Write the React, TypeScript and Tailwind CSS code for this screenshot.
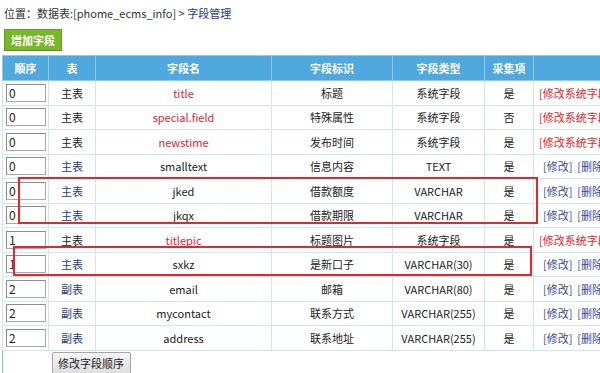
import React from "react";

type Row = {
  order: string;
  table: string;
  tableLink: boolean;
  name: string;
  sys: boolean;
  label: string;
  type: string;
  collect: string;
};

const rows: Row[] = [
  { order: "0", table: "主表", tableLink: false, name: "title", sys: true, label: "标题", type: "系统字段", collect: "是" },
  { order: "0", table: "主表", tableLink: false, name: "special.field", sys: true, label: "特殊属性", type: "系统字段", collect: "否" },
  { order: "0", table: "主表", tableLink: false, name: "newstime", sys: true, label: "发布时间", type: "系统字段", collect: "是" },
  { order: "0", table: "主表", tableLink: true, name: "smalltext", sys: false, label: "信息内容", type: "TEXT", collect: "是" },
  { order: "0", table: "主表", tableLink: true, name: "jked", sys: false, label: "借款额度", type: "VARCHAR", collect: "是" },
  { order: "0", table: "主表", tableLink: true, name: "jkqx", sys: false, label: "借款期限", type: "VARCHAR", collect: "是" },
  { order: "1", table: "主表", tableLink: false, name: "titlepic", sys: true, label: "标题图片", type: "系统字段", collect: "是" },
  { order: "1", table: "主表", tableLink: true, name: "sxkz", sys: false, label: "是新口子", type: "VARCHAR(30)", collect: "是" },
  { order: "2", table: "副表", tableLink: true, name: "email", sys: false, label: "邮箱", type: "VARCHAR(80)", collect: "是" },
  { order: "2", table: "副表", tableLink: true, name: "mycontact", sys: false, label: "联系方式", type: "VARCHAR(255)", collect: "是" },
  { order: "2", table: "副表", tableLink: true, name: "address", sys: false, label: "联系地址", type: "VARCHAR(255)", collect: "是" },
];

const cell = "border border-[#cfe6f6] p-0 text-center align-middle";
const head = "border border-[#8fcbef] p-0 text-center align-middle text-white font-bold";

export default function App() {
  return (
    <div
      className="relative w-[600px] h-[373px] overflow-hidden bg-white text-[11px] text-[#333]"
      style={{ fontFamily: '"Noto Sans CJK SC", "Noto Sans", sans-serif' }}
    >
      <div className="pl-[4px] pt-[5px] h-[29px] leading-[16px] text-[11px] text-[#333]">
        位置：数据表:[phome_ecms_info] &gt; <span className="text-[#253a8c]">字段管理</span>
      </div>
      <div className="pl-[4px]">
        <button className="w-[58px] h-[22px] bg-[#79b82a] border border-[#6aa023] border-b-[#5d8c1f] text-white font-bold text-[11px] leading-[20px]">
          增加字段
        </button>
      </div>
      <div className="mt-[4px] pl-[2px]">
        <table className="table-fixed border-collapse w-[720px] border border-[#7fc1ea]">
          <colgroup>
            <col className="w-[46px]" />
            <col className="w-[47px]" />
            <col className="w-[176px]" />
            <col className="w-[121px]" />
            <col className="w-[92px]" />
            <col className="w-[49px]" />
            <col className="w-[189px]" />
          </colgroup>
          <thead>
            <tr className="h-[25px] bg-[#4fa8de]">
              <th className={head}>顺序</th>
              <th className={head}>表</th>
              <th className={head}>字段名</th>
              <th className={head}>字段标识</th>
              <th className={head}>字段类型</th>
              <th className={head}>采集项</th>
              <th className={head}>操作</th>
            </tr>
          </thead>
          <tbody>
            {rows.map((r, i) => (
              <tr key={i} className="h-[24.5px]">
                <td className={cell + " text-left"}>
                  <div className="pl-[3px]">
                    <div className="w-[40px] h-[18px] border border-[#a9a9a9] border-t-[#8e8e8e] border-l-[#8e8e8e] bg-white pl-[2px] leading-[16px] text-[12px] text-[#222]">
                      {r.order}
                    </div>
                  </div>
                </td>
                <td className={cell + (r.tableLink ? " text-[#27398b]" : " text-[#222]")}>{r.table}</td>
                <td className={cell + (r.sys ? " text-[#e8232b]" : " text-[#222]")}>{r.name}</td>
                <td className={cell + " text-[#222]"}>{r.label}</td>
                <td className={cell + " text-[#222]"}>{r.type}</td>
                <td className={cell + " text-[#222]"}>{r.collect}</td>
                <td className={cell + " text-left whitespace-nowrap"}>
                  {r.sys ? (
                    <span className="pl-[5px] text-[#e8232b]">[修改系统字段]</span>
                  ) : (
                    <span className="pl-[9px] text-[#3b4a96]">[修改]&nbsp;&nbsp;[删除]</span>
                  )}
                </td>
              </tr>
            ))}
            <tr className="h-[30px]">
              <td></td>
              <td colSpan={6} className="p-0 align-top text-left">
                <button className="mt-[1px] ml-[3px] h-[22px] w-[79px] bg-gradient-to-b from-[#f6f6f6] to-[#dedede] border border-[#a6a6a6] rounded-[2px] text-[11px] text-[#222] leading-[18px]">
                  修改字段顺序
                </button>
              </td>
            </tr>
          </tbody>
        </table>
      </div>
      <div className="absolute left-[18px] top-[177px] w-[520px] h-[47px] border-2 border-[#e0282e]"></div>
      <div className="absolute left-[13px] top-[246px] w-[519px] h-[30px] border-2 border-[#e0282e]"></div>
    </div>
  );
}
